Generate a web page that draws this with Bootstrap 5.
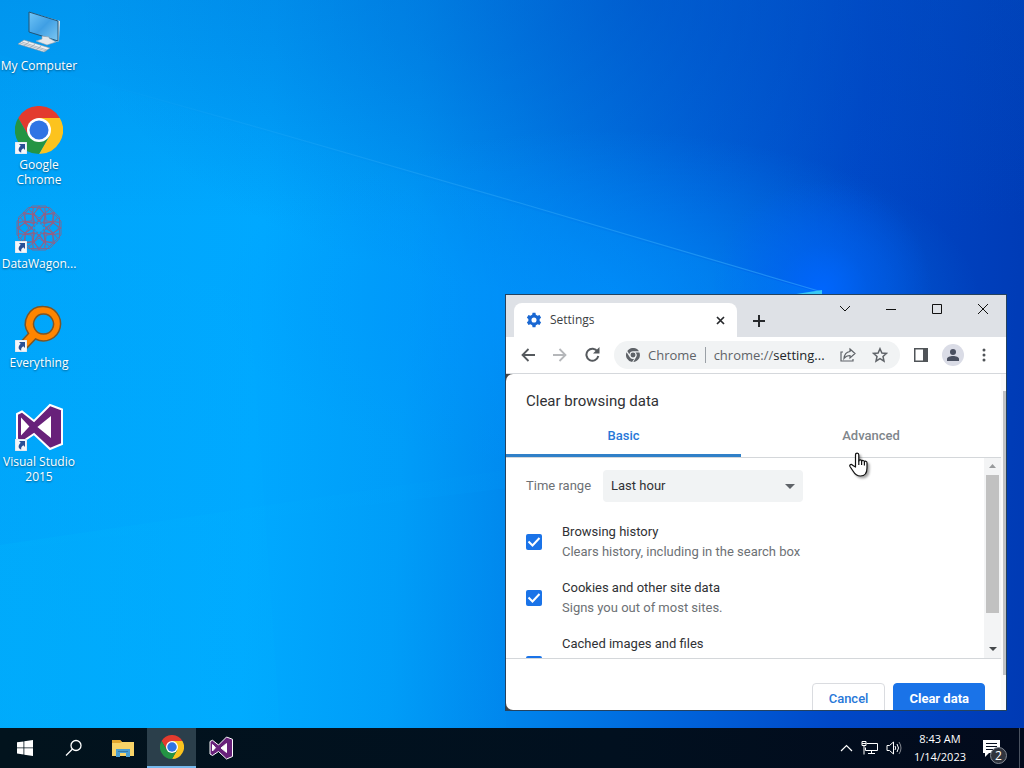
<!DOCTYPE html>
<html lang="en">
<head>
<meta charset="utf-8">
<meta name="viewport" content="width=device-width, initial-scale=1">
<title>Desktop</title>
<link rel="stylesheet" href="https://cdn.jsdelivr.net/npm/bootstrap@5.3.0/dist/css/bootstrap.min.css">
<style>
  :root { --ui: "Open Sans", "Noto Sans", sans-serif; --chrome: Roboto, "Liberation Sans", sans-serif; }
  body { font-family: var(--ui); font-size: 12px; line-height: 15px; color: #fff; background: #0058d0; }
  button { border: 0; background: none; padding: 0; color: inherit; }
  svg { display: block; flex: none; }

  .wallpaper {
    background:
      radial-gradient(circle at 822px 290px, rgba(0,102,255,.95) 0, rgba(0,98,250,.45) 45px, rgba(0,92,245,0) 110px),
      radial-gradient(ellipse 380px 170px at 600px 300px, rgba(0,145,255,.7), rgba(0,145,255,0)),
      radial-gradient(ellipse 560px 300px at 640px 0, rgba(0,70,190,.4), rgba(0,70,190,0)),
      linear-gradient(180deg, rgba(0,90,190,.2), rgba(0,90,190,0) 30%),
      linear-gradient(93deg, #00a4fa 0, #00a8ff 26%, #009cf8 40%, #0088ee 50%, #0066dc 66%, #0048c8 82%, #003ab4 100%);
  }
  .beams { inset: 0; width: 100%; height: 100%; }
  .shortcuts { width: 78px; }
  .shortcut { height: 99px; color: #fff; text-shadow: 0 1px 2px rgba(0,0,0,.45); }
  .shortcut:hover { color: #fff; }

  .browser { right: 17px; bottom: 17px; width: 502px; height: 417px; border: 1px solid #24425f; background: #fff; color: #3c4043; font-family: var(--chrome); font-size: 13px; line-height: 20px; }
  .tabstrip { height: 42px; background: #dee1e6; }
  .tab { width: 223px; height: 34px; background: #fff; border-radius: 8px 8px 0 0; font: 12px/34px var(--ui); }
  .caption-btn { width: 46px; height: 28px; color: #111; }
  .toolbar { height: 37px; border-bottom: 1px solid #d5d8dc; color: #5f6368; padding: 0 16px 0 15px; gap: 14px; }
  .nav-buttons { gap: 18px; }
  .omnibox { height: 28px; border-radius: 14px; background: #f1f3f4; font: 13px/28px var(--ui); min-width: 0; }
  .omnibox .divider { width: 1px; height: 16px; background: #9aa0a6; }
  .avatar { width: 22px; height: 22px; background: #dadce6; color: #4a5060; }

  .page-area { background: #444; min-height: 0; }
  .dialog-pane { background: #fff; border-radius: 7px 0 0 7px; }
  .dialog-title { font-size: 15px; font-weight: 400; line-height: 20px; color: #303134; padding: 17px 20px 6px; }
  .pane-tabs { height: 41px; border-bottom: 1px solid #d4d7da; }
  .pane-tab { font-weight: 500; color: #80868b; height: 40px; border-bottom: 3px solid transparent; padding-top: 1px; }
  .pane-tab.chosen { color: #2878d8; width: 235px; border-bottom-color: #3080c8; }
  .pane-tab.chosen + .pane-tab { flex: 1; }
  .options { height: 200px; overflow: hidden; flex: none; }
  .secondary-text { color: #6d7175; }
  .range-select { width: 200px; height: 32px; border: 0; border-radius: 4px; background-color: #f1f3f4; color: #303134; padding: 0 8px; appearance: none; }
  .range-arrow { right: 8px; top: 14px; pointer-events: none; }
  .option { padding: 8px 20px; color: #303134; min-height: 56px; }
  .option.tall { min-height: 76px; }
  .option .form-check-input { width: 16px; height: 16px; margin: 0; border-radius: 2px; border: 0; background-color: #1a73e8; flex: none; }
  .option .form-check-input:checked { background-size: 16px; background-image: url("data:image/svg+xml,%3csvg xmlns='http://www.w3.org/2000/svg' viewBox='0 0 16 16'%3e%3cpath fill='none' stroke='%23fff' stroke-width='2' d='m2.500 7.500 4 4 7-7.500'/%3e%3c/svg%3e"); }
  .scrollbar { width: 17px; background: #f3f4f5; }
  .scrollbar .thumb { width: 13px; height: 138px; background: #c1c1c1; }
  .scrollbar .arrow-cell { height: 17px; }
  .outer-scroll { width: 5px; background: #fafafa; padding-top: 17px; }
  .outer-scroll div { width: 3px; height: 284px; background: #c0c2c4; }
  .dialog-foot { border-top: 1px solid #d4d7da; padding: 24px 16px 0; }
  .dialog-foot .btn { height: 32px; padding: 0 15px; border-radius: 4px; font-size: 13px; font-weight: 500; line-height: 28px; }
  .dialog-foot .btn-outline-light { color: #2878d8; border-color: #dadce0; padding: 0 16px; }
  .dialog-foot .btn-primary { background: #1a73e8; border-color: #1a73e8; font-weight: 700; }
  .pointer { right: 155px; bottom: 250px; filter: drop-shadow(2px 2px 1px rgba(0,0,0,.35)); }

  .taskbar { height: 40px; background: linear-gradient(90deg, #02131d, #01101f 60%, #020a1c); }
  .task { width: 49px; height: 40px; }
  .task.current { background: #2b3f4b; border-bottom: 2px solid #76b9ed; }
  .clock { font-size: 11px; line-height: 18px; }
  .notify { margin: 0 18px 0 17px; }
  .show-desktop { width: 5px; border-left: 1px solid #4a5260; height: 40px; }
  .count { left: 7px; top: 7px; width: 17px; height: 17px; line-height: 15px; background: #30343e; border: 1px solid #858a94; font-size: 12px; }
</style>
</head>
<body>
<svg width="0" height="0" class="position-absolute" aria-hidden="true">
  <symbol id="chrome" viewBox="-24 -24 48 48">
    <path fill="#e33b2e" d="M-20.8-12A24 24 0 0 1 20.8-12H0L-10.4 6z"/>
    <path fill="#fcc31e" d="M20.8-12A24 24 0 0 1 0 24L10.4 6 0-12z"/>
    <path fill="#249444" d="M0 24A24 24 0 0 1-20.8-12L-10.4 6H10.4z"/>
    <circle r="12" fill="#fff"/><circle r="9.5" fill="#2f74e4"/>
  </symbol>
  <symbol id="vs" viewBox="0 0 48 48">
    <path fill="#68217a" fill-rule="evenodd" stroke="#fff" stroke-width="2" d="M2 11 7 8.500 19 18 35 2 47 6.500V41L35 46 19 31 7 39 2 36zM7 17v13l6-6.500zM24 24l11 9V15z"/>
    <path fill="#fff" d="M7 17v13l6-6.500zM24 24l11 9V15z"/>
  </symbol>
  <symbol id="link-arrow" viewBox="0 0 12 12">
    <path fill="#f4f6fa" stroke="#b6c4d4" stroke-width=".5" d="M0 0h12v12H0z"/>
    <path fill="#2a4f95" d="M4 2h6v6L8.300 6.300C6.500 7.500 6 8.500 6.200 10.700 3 9.500 2.800 6.500 5.700 3.800z"/>
  </symbol>
</svg>

<div class="vh-100 d-flex flex-column overflow-hidden">
  <main class="wallpaper position-relative flex-grow-1">
    <svg class="beams position-absolute" viewBox="0 0 1024 728" preserveAspectRatio="none" aria-hidden="true">
      <defs>
        <linearGradient id="ray"><stop offset="0" stop-color="#6cf" stop-opacity="0"/><stop offset="1" stop-color="#3cb4ff" stop-opacity=".5"/></linearGradient>
        <linearGradient id="wedge"><stop offset="0" stop-color="#00b4ff" stop-opacity=".05"/><stop offset=".6" stop-color="#00a0ff" stop-opacity=".12"/><stop offset="1" stop-color="#0096ff" stop-opacity=".25"/></linearGradient>
        <linearGradient id="low"><stop offset="0" stop-color="#00c4ff" stop-opacity=".4"/><stop offset="1" stop-color="#00b0ff" stop-opacity=".08"/></linearGradient>
        <linearGradient id="rise" x2="0" y2="1"><stop offset="0" stop-color="#00b8ff" stop-opacity="0"/><stop offset="1" stop-color="#00b8ff" stop-opacity=".35"/></linearGradient>
      </defs>
      <path fill="url(#wedge)" d="M0 55 820 293V450L0 550z"/>
      <path fill="url(#rise)" d="M0 200 250 300 280 728H0z" opacity=".35"/>
      <path fill="url(#low)" d="M0 545 506 470V728H0z" opacity=".35"/>
      <path fill="none" stroke="url(#ray)" stroke-width="1.200" d="M100 83 260 128 520 203 822 292"/>
      <path fill="#38c8f4" d="M790 295 822 290v5z"/>
    </svg>

    <nav class="shortcuts position-relative d-flex flex-column text-center">
      <a class="shortcut d-flex flex-column align-items-center text-decoration-none pt-2" href="#">
        <svg class="mb-1" width="48" height="46" viewBox="0 0 48 46">
          <defs><linearGradient id="screen" x2="1" y2="1"><stop stop-color="#72c6f8"/><stop offset=".5" stop-color="#3f9fe4"/><stop offset="1" stop-color="#7fc8f2"/></linearGradient></defs>
          <path fill="#dbe6ee" d="M14 4 45 13l-1 20-2 1z"/><path fill="url(#screen)" stroke="#235475" d="M14 4 43 13V33L14 24z"/>
          <path fill="#e2e7ec" stroke="#8ea0ae" stroke-width=".6" d="M27 28v3l-6 2 11 4 9-3-7-4v-1z"/>
          <path fill="#edf0f2" stroke="#8796a3" stroke-width=".6" d="M9 32 35 40 29 44 3 36z"/>
          <path stroke="#96a4b0" stroke-width=".7" d="M7 34 32 42M5 35 31 43M14 34l-5 4M20 36l-5 4M26 38l-5 4"/>
        </svg>
        <span>My Computer</span>
      </a>
      <a class="shortcut d-flex flex-column align-items-center text-decoration-none pt-2" href="#">
        <svg class="mb-1" width="48" height="46" viewBox="0 1 48 46" overflow="visible"><use href="#chrome" width="48" height="48"/><use href="#link-arrow" y="36" width="12" height="12"/></svg>
        <span>Google<br>Chrome</span>
      </a>
      <a class="shortcut d-flex flex-column align-items-center text-decoration-none pt-2" href="#">
        <svg class="mb-1" width="48" height="46" viewBox="0 1 48 46" overflow="visible">
          <g fill="none" stroke="#80688f" stroke-width=".9" transform="translate(24 23)">
            <g id="petals"><path d="M-7-22H7L14-15V-6L6 2H-6L-14-6v-9z"/><path stroke="#a5597a" d="M0-22 5-14 0-6-5-14zM-11-19 0-10 11-19"/></g>
            <use href="#petals" transform="rotate(45)"/><use href="#petals" transform="rotate(90)"/><use href="#petals" transform="rotate(135)"/>
            <use href="#petals" transform="rotate(180)"/><use href="#petals" transform="rotate(225)"/><use href="#petals" transform="rotate(270)"/><use href="#petals" transform="rotate(315)"/>
          </g><circle cx="24" cy="23" r="4" fill="#18a6f2"/>
          <use href="#link-arrow" y="36" width="12" height="12"/>
        </svg>
        <span>DataWagon...</span>
      </a>
      <a class="shortcut d-flex flex-column align-items-center text-decoration-none pt-2" href="#">
        <svg class="mb-1" width="48" height="46" viewBox="0 1 48 46" overflow="visible">
          <path fill="#ff8500" stroke="#7b5527" stroke-width="1.500" fill-rule="evenodd" d="M28.500 2.500a17.200 17.200 0 1 1-8 32.500L10 46 4 40 13.500 29.500A17.200 17.200 0 0 1 28.500 2.500zM28.500 10a10 10 0 1 0 .1 0z"/>
          <use href="#link-arrow" y="36" width="12" height="12"/>
        </svg>
        <span>Everything</span>
      </a>
      <a class="shortcut d-flex flex-column align-items-center text-decoration-none pt-2" href="#">
        <svg class="mb-1" width="48" height="46" viewBox="0 1 48 46" overflow="visible"><use href="#vs" width="48" height="48"/><use href="#link-arrow" y="36" width="12" height="12"/></svg>
        <span>Visual Studio<br>2015</span>
      </a>
    </nav>

    <section class="browser position-absolute d-flex flex-column overflow-hidden" aria-label="Settings">
      <header class="tabstrip d-flex align-items-start ps-2">
        <div class="tab d-flex align-items-center mt-2 px-2">
          <svg class="mx-1" width="16" height="16" viewBox="1 1 22 22" fill="#1967d2"><path fill-rule="evenodd" d="M19.700 13.500a8 8 0 0 0 0-3l2.100-1.700-2.200-3.700-2.600 1a8 8 0 0 0-2.500-1.400L14 2h-4l-.5 2.700A8 8 0 0 0 7 6.100l-2.600-1-2.200 3.700 2.100 1.700a8 8 0 0 0 0 3l-2.100 1.700 2.200 3.700 2.600-1a8 8 0 0 0 2.500 1.400L10 22h4l.5-2.700a8 8 0 0 0 2.500-1.400l2.600 1 2.200-3.700zM12 15.500a3.500 3.500 0 1 1 0-7 3.500 3.500 0 0 1 0 7z"/></svg>
          <span class="flex-grow-1 ms-1">Settings</span>
          <button type="button" aria-label="Close tab"><svg class="me-1" width="9" height="9" viewBox="0 0 9 9" stroke="#27292c" stroke-width="1.700"><path d="m1 1 7 7m0-7L1 8"/></svg></button>
        </div>
        <button class="mt-3 ms-3 pt-1" type="button" aria-label="New tab"><svg width="12" height="12" viewBox="0 0 12 12" stroke="#27292c" stroke-width="2"><path d="M0 6h12M6 0v12"/></svg></button>
        <div class="d-flex ms-auto">
          <button class="caption-btn" type="button" aria-label="Search tabs"><svg class="mx-auto" width="12" height="12" viewBox="0 0 12 12" fill="none" stroke="currentColor"><path d="m1 3 5 5 5-5"/></svg></button>
          <button class="caption-btn" type="button" aria-label="Minimize"><svg class="mx-auto" width="12" height="12" viewBox="0 0 12 12" stroke="currentColor"><path d="M1 6.500h10"/></svg></button>
          <button class="caption-btn" type="button" aria-label="Maximize"><svg class="mx-auto" width="12" height="12" viewBox="0 0 12 12" fill="none" stroke="currentColor"><path d="M1.500 1.500h9v9h-9z"/></svg></button>
          <button class="caption-btn" type="button" aria-label="Close"><svg class="mx-auto" width="12" height="12" viewBox="0 0 12 12" stroke="currentColor"><path d="m1 1 10 10m0-10L1 11"/></svg></button>
        </div>
      </header>

      <div class="toolbar d-flex align-items-center">
        <div class="nav-buttons d-flex">
          <button type="button" aria-label="Back"><svg width="14" height="14" viewBox="0 0 14 14" fill="none" stroke="#55595d" stroke-width="1.800"><path d="M14 7H1.500M7.500 1l-6 6 6 6"/></svg></button>
          <button type="button" aria-label="Forward"><svg width="14" height="14" viewBox="0 0 14 14" fill="none" stroke="#b5b7ba" stroke-width="1.800"><path d="M0 7h12.500M6.500 1l6 6-6 6"/></svg></button>
          <button type="button" aria-label="Reload"><svg width="15" height="15" viewBox="0 0 15 15" fill="none" stroke="#55595d" stroke-width="2"><path d="M12.500 4.500A6 6 0 1 0 13.300 9"/><path fill="#55595d" stroke="none" d="M14.500 0v6.500H8z"/></svg></button>
        </div>
        <div class="omnibox d-flex align-items-center flex-grow-1 px-2">
          <svg class="ms-1" width="14" height="14" viewBox="-24 -24 48 48" fill="#5f6368"><path d="M-19.500-14A24 24 0 0 1 20.500-13H0A13 13 0 0 0-12.500-3zM22-9A24 24 0 0 1 1 24L11 7A13 13 0 0 0 8.500-9zM-3 23.800A24 24 0 0 1-22-9.500L-11.500 7A13 13 0 0 0 4 12.500z"/><circle r="8.500"/></svg>
          <span class="ms-2">Chrome</span><span class="divider mx-2"></span><span>chrome://<span class="text-dark">setting...</span></span>
          <button type="button" class="ms-auto" aria-label="Share"><svg width="16" height="16" viewBox="0 0 16 16" fill="none" stroke="currentColor" stroke-width="1.200"><path d="M3 5H1v9h12v-2M10 2l5 4.500-5 4.500V8.500c-3 0-4.500 1-6 3 .3-4 2.500-6.500 6-7z"/></svg></button>
          <button type="button" class="ms-3 me-1" aria-label="Bookmark"><svg width="16" height="16" viewBox="0 0 16 16" fill="none" stroke="currentColor" stroke-width="1.500"><path d="m8 1.700 1.900 4.300 4.600.4-3.500 3.100 1 4.600-4-2.400-4 2.400 1-4.600L1.500 6.400l4.600-.4z"/></svg></button>
        </div>
        <button type="button" aria-label="Side panel"><svg width="14" height="14" viewBox="0 0 14 14"><path fill="#505458" fill-rule="evenodd" d="M0 0h14v14H0zM1.500 1.500v11H9v-11z"/></svg></button>
        <button type="button" class="avatar rounded-circle" aria-label="Profile"><svg class="mx-auto" width="14" height="14" viewBox="0 0 14 14" fill="currentColor"><circle cx="7" cy="4" r="3"/><path d="M1 13v-2c0-2 3-3 6-3s6 1 6 3v2z"/></svg></button>
        <button type="button" class="px-1" aria-label="Menu"><svg width="4" height="14" viewBox="0 0 4 14" fill="#505458"><circle cx="2" cy="2" r="1.500"/><circle cx="2" cy="7" r="1.500"/><circle cx="2" cy="12" r="1.500"/></svg></button>
      </div>

      <div class="page-area d-flex flex-grow-1">
        <div class="dialog-pane d-flex flex-column flex-grow-1 overflow-hidden">
          <h1 class="dialog-title m-0">Clear browsing data</h1>
          <div class="pane-tabs d-flex align-items-start flex-shrink-0" role="tablist">
            <button class="pane-tab chosen" type="button" role="tab" aria-selected="true">Basic</button>
            <button class="pane-tab" type="button" role="tab" aria-selected="false">Advanced</button>
          </div>
          <div class="options d-flex">
            <form class="flex-grow-1">
              <div class="d-flex align-items-center px-3 py-1 my-2">
                <label class="secondary-text ms-1 me-2 pe-1" for="range">Time range</label>
                <div class="position-relative">
                  <select class="range-select" id="range"><option>Last hour</option></select>
                  <svg class="range-arrow position-absolute" width="10" height="5" viewBox="0 0 10 5" fill="#5f6368"><path d="M0 0h10L5 5z"/></svg>
                </div>
              </div>
              <div class="option d-flex align-items-center"><input class="form-check-input" type="checkbox" id="history" checked><label class="ps-3 ms-1" for="history">Browsing history<span class="d-block secondary-text">Clears history, including in the search box</span></label></div>
              <div class="option d-flex align-items-center"><input class="form-check-input" type="checkbox" id="cookies" checked><label class="ps-3 ms-1" for="cookies">Cookies and other site data<span class="d-block secondary-text">Signs you out of most sites.</span></label></div>
              <div class="option tall d-flex align-items-center"><input class="form-check-input" type="checkbox" id="cache" checked><label class="ps-3 ms-1 align-self-start" for="cache">Cached images and files</label></div>
            </form>
            <div class="scrollbar d-flex flex-column align-items-center" aria-hidden="true">
              <div class="arrow-cell d-flex align-items-center"><svg width="7" height="4" viewBox="0 0 7 4" fill="#989a9c"><path d="M0 4h7L3.500 0z"/></svg></div>
              <div class="thumb"></div>
              <div class="arrow-cell d-flex align-items-center mt-auto"><svg width="8" height="4" viewBox="0 0 8 4" fill="#45484b"><path d="M0 0h8L4 4z"/></svg></div>
            </div>
          </div>
          <footer class="dialog-foot d-flex justify-content-end gap-2">
            <button class="btn btn-outline-light" type="button">Cancel</button>
            <button class="btn btn-primary" type="button">Clear data</button>
          </footer>
        </div>
        <div class="outer-scroll d-flex justify-content-end align-items-start" aria-hidden="true"><div></div></div>
      </div>
    </section>

    <svg class="pointer position-absolute" width="20" height="26" viewBox="0 0 20 26" fill="#fff" stroke="#111" stroke-width="1.200" stroke-linejoin="round"><path d="M6.500 15V3c0-2.600 3.300-2.600 3.300 0v6c.4-1.700 2.800-1.300 2.800.3.500-1.400 2.800-1 2.800.6.500-1.200 2.600-.8 2.600 1V16c0 5-2.500 8-6.500 8-3.500 0-5.500-1.500-7.500-5L1 14.500c-1-2 1.500-2.600 2.500-1.300z"/><path d="M9.800 8.500v4.500M12.600 9v4M15.400 10v3.500"/></svg>
  </main>

  <footer class="taskbar d-flex align-items-center flex-shrink-0 position-relative">
    <button class="task" type="button" aria-label="Start"><svg class="mx-auto" width="16" height="16" viewBox="0 0 16 16" fill="#fff"><path d="M0 2.300 6.500 1.400V7.500H0zM7.300 1.300 16 0v7.500H7.300zM0 8.300h6.500v6.200L0 13.600zM7.300 8.300H16V16l-8.700-1.300z"/></svg></button>
    <button class="task" type="button" aria-label="Search"><svg class="mx-auto" width="18" height="18" viewBox="0 0 18 18" fill="none" stroke="#fff" stroke-width="1.300"><circle cx="11" cy="6.500" r="5"/><path d="M7.500 10 1 16.500"/></svg></button>
    <button class="task" type="button" aria-label="File Explorer"><svg class="mx-auto" width="22" height="18" viewBox="0 0 22 18"><path fill="#e9ad32" d="M0 1h8l2 2h11v5H0z"/><path fill="#f8d468" d="M0 3h22v14H0z"/><path fill="#e3a830" d="M0 1h8l2 2-2 1H0z"/><path fill="#4a9ed2" d="M4 10h14v8h-4v-4H8v4H4z"/><path fill="#3478a8" d="M6 12h10v1H6z"/></svg></button>
    <button class="task current" type="button" aria-label="Google Chrome"><svg class="mx-auto" width="24" height="24"><use href="#chrome"/></svg></button>
    <button class="task" type="button" aria-label="Visual Studio 2015"><svg class="mx-auto" width="24" height="24"><use href="#vs"/></svg></button>
    <div class="d-flex align-items-center ms-auto">
      <button class="me-2" type="button" aria-label="Hidden icons"><svg width="13" height="8" viewBox="0 0 13 8" fill="none" stroke="#fff" stroke-width="1.200"><path d="m1 7 5.500-5.500L12 7"/></svg></button>
      <button class="me-2" type="button" aria-label="Network"><svg width="17" height="14" viewBox="0 0 17 14" fill="none" stroke="#fff"><path d="M5.500 2.500h11v7h-12v-3M7 12.500h7M10.500 10v2M1 .5h4v4H1zM3 5v8.500M1 2.500h4"/></svg></button>
      <button class="me-2" type="button" aria-label="Volume"><svg width="16" height="14" viewBox="0 0 16 14" fill="none" stroke="#fff"><path d="M1 4.500h2.500l4-3.500v12l-4-3.500H1zM9 5q1.500 2 0 4M11 3q3 4 0 8"/><path stroke="#858991" d="M13 1q4 6 0 12"/></svg></button>
      <button class="clock text-center ms-1" type="button">8:43 AM<br>1/14/2023</button>
      <button class="notify position-relative" type="button" aria-label="Notifications"><svg width="18" height="17" viewBox="0 0 18 17"><path fill="#fff" d="M0 0h17v13H6l-4 4v-4H0z"/><path stroke="#071020" d="M3 3.500h11M3 6.500h11M3 9.500h7"/></svg><span class="count position-absolute rounded-circle">2</span></button>
      <div class="show-desktop"></div>
    </div>
  </footer>
</div>
<script src="https://cdn.jsdelivr.net/npm/bootstrap@5.3.0/dist/js/bootstrap.bundle.min.js"></script>
</body>
</html>
